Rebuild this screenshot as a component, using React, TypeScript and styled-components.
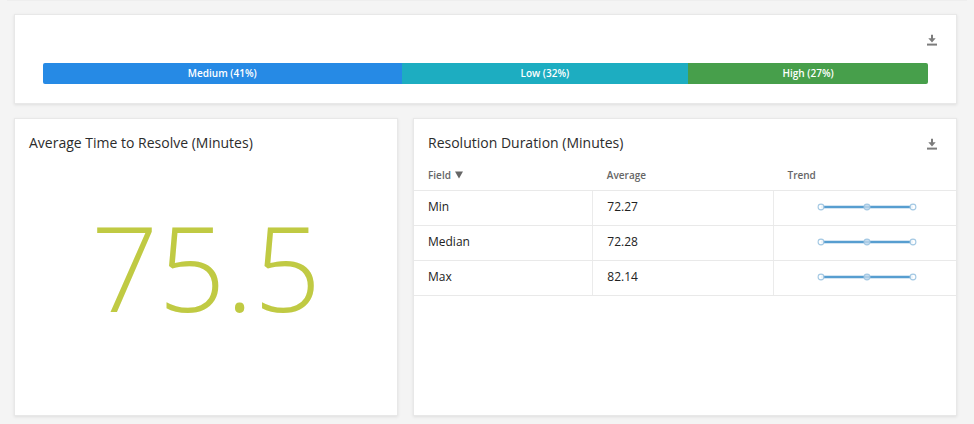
import React from "react";
import styled, { createGlobalStyle } from "styled-components";

const GlobalStyle = createGlobalStyle`
  *, *::before, *::after { box-sizing: border-box; }
  body {
    margin: 0;
    background: #f4f4f4;
    color: #333;
    font-family: "Open Sans", "Noto Sans", sans-serif;
  }
`;

const Page = styled.main`
  min-height: 100vh;
  padding: 0 17px 8px 14px;
`;

const Divider = styled.hr`
  height: 1px;
  margin: 0 -10px 13px -7px;
  border: 0;
  background: #eeeeee;
`;

const Dashboard = styled.div`
  display: grid;
  grid-template-columns: 12fr 17fr;
  gap: 14px 15px;
`;

const Card = styled.section<{ $wide?: boolean; $tall?: boolean }>`
  display: flex;
  flex-direction: column;
  grid-column: ${(p) => (p.$wide ? "1 / -1" : "auto")};
  min-height: ${(p) => (p.$tall ? "298px" : "0")};
  border: 1px solid #e8e8e8;
  background: #fff;
  box-shadow: 0 1px 3px rgba(0, 0, 0, 0.09);
`;

const CardHeader = styled.header`
  display: flex;
  align-items: center;
  justify-content: space-between;
  height: 48px;
  padding: 0 16px 0 14px;
`;

const Title = styled.h2`
  margin: 0;
  color: #2c2c2c;
  font-size: 14px;
  font-weight: 400;
  line-height: 20px;
`;

const IconButton = styled.button`
  display: flex;
  margin-left: auto;
  padding: 4px 2px 2px;
  border: 0;
  background: none;
  color: #7c7c7c;
  cursor: pointer;
`;

const DistributionBar = styled.div`
  display: flex;
  height: 21px;
  margin: 0 28px 19px;
  overflow: hidden;
  border-radius: 2px;
`;

const Segment = styled.div<{ $share: number; $color: string }>`
  flex: ${(p) => p.$share} 1 0;
  background: ${(p) => p.$color};
  color: #fff;
  font-size: 10px;
  font-weight: 600;
  line-height: 20px;
  text-align: center;
`;

const Metric = styled.div`
  display: flex;
  flex: 1;
  align-items: center;
  justify-content: center;
  padding-bottom: 48px;
  color: #c0ca43;
  font-size: 118px;
  font-weight: 300;
  line-height: 160px;
`;

const Table = styled.table`
  width: 100%;
  border-collapse: collapse;
  table-layout: fixed;
`;

const Column = styled.col<{ $width: string }>`
  width: ${(p) => p.$width};
`;

const HeadCell = styled.th`
  height: 23px;
  padding: 1px 14px 8px;
  color: #666;
  font-size: 10px;
  font-weight: 600;
  line-height: 14px;
  text-align: left;
`;

const SortButton = styled.button`
  display: flex;
  align-items: center;
  gap: 4px;
  padding: 0;
  border: 0;
  background: none;
  color: inherit;
  font: inherit;
  cursor: pointer;
`;

const Cell = styled.td`
  height: 35px;
  padding: 0 14px 2px;
  border-top: 1px solid #e9e9e9;
  border-bottom: 1px solid #e9e9e9;
  color: #222;
  font-size: 12px;
  font-weight: 500;
  line-height: 18px;

  & + & {
    border-left: 1px solid #ebebeb;
  }
`;

const TrendCell = styled(Cell)`
  padding: 0 12px 2px 16px;
`;

const TrendChart = styled.svg`
  display: block;
  margin: 0 auto;
`;

function DownloadButton({ label }: { label: string }) {
  return (
    <IconButton type="button" aria-label={label}>
      <svg width="12" height="12" viewBox="0 0 12 12" fill="currentColor" aria-hidden="true">
        <path d="M5 0.8h2v3.4h2.7L6 8.4 2.3 4.2H5z" />
        <path d="M1 9.6h10v2H1z" />
      </svg>
    </IconButton>
  );
}

function Trend({ label }: { label: string }) {
  return (
    <TrendChart width="100" height="10" viewBox="0 0 100 10" role="img" aria-label={label}>
      <path d="M4 5h92" stroke="#a9cbe5" strokeWidth="3" />
      <path d="M6 5h88" stroke="#3d8fc9" strokeWidth="1.6" />
      {[4, 50, 96].map((x) => (
        <circle
          key={x}
          cx={x}
          cy="5"
          r="2.9"
          fill={x === 50 ? "#c3daec" : "#fff"}
          fillOpacity="0.8"
          stroke="#a3c8e3"
          strokeWidth="1.1"
        />
      ))}
    </TrendChart>
  );
}

const segments = [
  { name: "Medium", share: 41, width: 359, color: "#268ae5" },
  { name: "Low", share: 32, width: 287, color: "#1dadc1" },
  { name: "High", share: 27, width: 240, color: "#479f4b" },
];

const rows = [
  { field: "Min", average: "72.27" },
  { field: "Median", average: "72.28" },
  { field: "Max", average: "82.14" },
];

export default function App() {
  return (
    <>
      <GlobalStyle />
      <Page>
        <Divider />
        <Dashboard>
          <Card $wide aria-label="Priority distribution">
            <CardHeader>
              <DownloadButton label="Download priority distribution" />
            </CardHeader>
            <DistributionBar>
              {segments.map((s) => (
                <Segment key={s.name} $share={s.width} $color={s.color}>
                  {`${s.name} (${s.share}%)`}
                </Segment>
              ))}
            </DistributionBar>
          </Card>

          <Card $tall>
            <CardHeader>
              <Title>Average Time to Resolve (Minutes)</Title>
            </CardHeader>
            <Metric>75.5</Metric>
          </Card>

          <Card $tall>
            <CardHeader>
              <Title>Resolution Duration (Minutes)</Title>
              <DownloadButton label="Download resolution duration" />
            </CardHeader>
            <Table>
              <colgroup>
                <Column $width="33%" />
                <Column $width="calc(100% / 3)" />
                <Column $width="auto" />
              </colgroup>
              <thead>
                <tr>
                  <HeadCell scope="col" aria-sort="descending">
                    <SortButton type="button">
                      Field
                      <svg width="8" height="8" viewBox="0 0 8 8" fill="#666" aria-hidden="true">
                        <path d="M0 0.5h8L4 7.5z" />
                      </svg>
                    </SortButton>
                  </HeadCell>
                  <HeadCell scope="col">Average</HeadCell>
                  <HeadCell scope="col">Trend</HeadCell>
                </tr>
              </thead>
              <tbody>
                {rows.map((r) => (
                  <tr key={r.field}>
                    <Cell>{r.field}</Cell>
                    <Cell>{r.average}</Cell>
                    <TrendCell>
                      <Trend label={`${r.field} trend`} />
                    </TrendCell>
                  </tr>
                ))}
              </tbody>
            </Table>
          </Card>
        </Dashboard>
      </Page>
    </>
  );
}
